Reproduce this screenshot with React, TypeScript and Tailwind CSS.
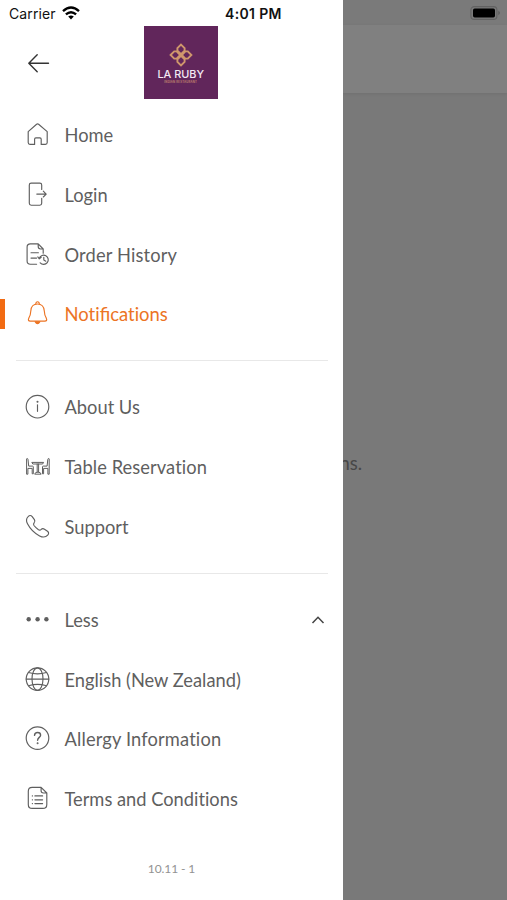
import type { ReactNode } from 'react';

function Icon({ children }: { children: ReactNode }) {
  return (
    <svg
      className="h-[26px] w-[26px] shrink-0 overflow-visible"
      viewBox="0 0 26 26"
      fill="none"
      stroke="currentColor"
      strokeWidth="1.15"
      strokeLinecap="round"
      strokeLinejoin="round"
    >
      {children}
    </svg>
  );
}

const HomeIcon = () => (
  <Icon>
    <path d="M4.2 9.6 12.6 2.2Q13.6 1.4 14.6 2.2L23.2 9.6V20.6Q23.2 22.4 21.4 22.4H17.2V17.2Q17.2 15.9 15.9 15.9H11.9Q10.6 15.9 10.6 17.2V22.4H6Q4.2 22.4 4.2 20.6Z" />
  </Icon>
);

const LoginIcon = () => (
  <Icon>
    <path d="M17.7 7.4V3Q17.7 1.1 15.8 1.1H7.2Q5.3 1.1 5.3 3V21.3Q5.3 23.2 7.2 23.2H15.8Q17.7 23.2 17.7 21.3V16.2" />
    <path d="M12.8 12.1H22.1M19.3 9.2 22.2 12.1 19.3 15" />
  </Icon>
);

const HistoryIcon = () => (
  <Icon>
    <path d="M12.6 22.2H6.4Q3.1 22.2 3.1 19V5Q3.1 1.8 6.4 1.8H14.2L19.2 7V11.2M14.2 1.8V4.6Q14.2 7 16.6 7H19.2" />
    <path d="M7 10.7H14.4M7 16.1H12.6" />
    <path d="M15.3 16.3A4.6 4.6 0 1 1 16.2 20.8M13.8 14.9 15.3 16.8 17.2 15.3M19.8 15.3V18L21.8 19.2" />
  </Icon>
);

const BellIcon = () => (
  <Icon>
    <path d="M13.5 3C9 3 7 6.2 6.8 10C6.6 13.6 6.1 15.4 4.8 17.2Q3.5 20.1 6.3 20.1H20.8Q23.6 20.1 22.3 17.2C21 15.4 20.5 13.6 20.3 10C20 6.2 18 3 13.5 3Z" />
    <path d="M11.8 3.1C11.6-.1 15.5-.1 15.3 3.1" />
    <path d="M11.1 20.7Q13.5 24.6 15.9 20.7Z" fill="currentColor" />
  </Icon>
);

const InfoIcon = () => (
  <Icon>
    <circle cx="13.5" cy="12.7" r="11.3" />
    <path d="M13.5 10.7V17.3" />
    <circle cx="13.5" cy="7.8" r=".45" fill="currentColor" />
  </Icon>
);

const TableIcon = () => (
  <Icon>
    <path strokeWidth="1" d="M2.6 19.8V5Q2.6 4.5 3.2 4.5T4 5.4L4.7 12.1H8.6Q9.3 12.1 9.3 12.9V19.8H8.2V14.4H3.9V19.8ZM25.2 19.8V5Q25.2 4.5 24.6 4.5T23.8 5.4L23.1 12.1H19.2Q18.5 12.1 18.5 12.9V19.8H19.6V14.4H23.9V19.8Z" />
    <path strokeWidth="1" d="M8.2 8.4H19.6L18.6 10H9.2ZM13.2 10V18.2M14.6 10V18.2M10.8 19.8Q11.2 18.2 13.2 18.2H14.6Q16.6 18.2 17 19.8Z" />
  </Icon>
);

const PhoneIcon = () => (
  <Icon>
    <path d="M4.1 2.6Q6.3.3 8.2 2.6L10.4 5.6Q11.6 7.4 10.1 8.9Q9 10.1 10 11.5Q11.9 14 14.5 15.7Q16 16.6 17.2 15.4Q18.6 13.9 20.5 15.2L23.5 17.3Q25.6 19 23.7 21.1C21.6 23.5 18.6 23.4 15.6 21.9C10.4 19.3 6.2 15 3.5 9.8C2 6.9 2 4.7 4.1 2.6Z" />
  </Icon>
);

const DotsIcon = () => (
  <Icon>
    <g fill="currentColor" stroke="none">
      <circle cx="4.7" cy="12.2" r="2.2" />
      <circle cx="13.6" cy="12.2" r="2.2" />
      <circle cx="22.4" cy="12.2" r="2.2" />
    </g>
  </Icon>
);

const GlobeIcon = () => (
  <Icon>
    <circle cx="13.5" cy="12.1" r="11.3" />
    <ellipse cx="13.5" cy="12.1" rx="5.5" ry="11.3" />
    <path d="M2.2 12.1H24.8M4.6 5.5Q13.5 8.2 22.4 5.5M4.6 18.7Q13.5 16 22.4 18.7" />
  </Icon>
);

const QuestionIcon = () => (
  <Icon>
    <circle cx="13.5" cy="12.1" r="11.3" />
    <path strokeWidth="1.4" d="M10.5 9.4C10.6 7.5 11.8 6.5 13.6 6.5C15.4 6.5 16.6 7.5 16.6 9.2C16.6 11.3 13.6 11.5 13.6 14.2" />
    <circle cx="13.6" cy="17.2" r=".4" fill="currentColor" />
  </Icon>
);

const TermsIcon = () => (
  <Icon>
    <path d="M8.2 1.3H17.1L22.8 7V18.4Q22.8 22.4 18.8 22.4H8.2Q4.3 22.4 4.3 18.4V5.2Q4.3 1.3 8.2 1.3ZM17.1 1.3V4.8Q17.1 7 19.4 7H22.8" />
    <path d="M10.9 9.9H18.6M10.9 13.8H18.6M10.9 17.6H18.6M8.3 9.9H8.5M8.3 13.8H8.5M8.3 17.6H8.5" />
  </Icon>
);

function Row({ icon, label, active, children }: { icon: ReactNode; label: ReactNode; active?: boolean; children?: ReactNode }) {
  return (
    <div className={`relative flex h-[59.85px] items-center pr-[18px] pl-6 ${active ? 'text-[#ec7424]' : 'text-[#5f5f5f]'}`}>
      {active && <span className="absolute top-[14px] left-0 h-[30px] w-[4.5px] bg-[#f26b13]" />}
      {icon}
      <span className="ml-[14.5px] flex-1 text-[18.3px] leading-6 whitespace-nowrap [font-variant-ligatures:none]">{label}</span>
      {children}
    </div>
  );
}

function Logo() {
  return (
    <div className="mt-[0.5px] ml-[94px] flex h-[73px] w-[73.5px] flex-col items-center bg-[#61265b]">
      <svg className="mt-[17px] h-6 w-6 shrink-0" viewBox="0 0 24 24" fill="none" stroke="#cf976c" strokeWidth="1.9">
        <path d="M12 1.6 15.6 5.2V7.6L12 11.2 8.4 7.6V5.2ZM12 12.8 15.6 16.4V18.8L12 22.4 8.4 18.8V16.4ZM1.6 12 5.2 8.4H7.6L11.2 12 7.6 15.6H5.2ZM12.8 12 16.4 8.4H18.8L22.4 12 18.8 15.6H16.4Z" />
      </svg>
      <span className="mt-[2px] font-['Inter',sans-serif] text-[10.9px] leading-[11px] font-medium whitespace-nowrap text-[#f3eaf4]">
        LA RUBY
      </span>
      <span className="mt-[1px] font-['Inter',sans-serif] text-[2.8px] leading-[3px] font-semibold tracking-[0.2px] whitespace-nowrap text-[#c98c70]">
        INDIAN RESTAURANT
      </span>
    </div>
  );
}

export default function App() {
  return (
    <div className="flex h-[900px] w-[507px] overflow-hidden font-['Lato',sans-serif]">
      <aside className="flex w-[343px] shrink-0 flex-col bg-white">
        <div className="flex h-[25px] items-center pl-[9px] font-['Inter',sans-serif] text-[#111]">
          <span className="mt-[3px] w-[53px] text-[14px] leading-5 tracking-[0.1px] whitespace-nowrap">Carrier</span>
          <svg className="mt-[1px] h-[14px] w-[18px]" viewBox="0 0 18 14" fill="none" stroke="#000" strokeWidth="2.4">
            <path d="M1 5.1Q9-1.9 17 5.1M3.9 8.4Q9 4 14.1 8.4" />
            <path d="M9 13.4 6.2 10.6Q9 8.3 11.8 10.6Z" fill="#000" stroke="none" />
          </svg>
          <span className="mt-[3px] ml-[145px] text-[14px] leading-5 font-semibold tracking-[0.35px] whitespace-nowrap">4:01 PM</span>
        </div>
        <header className="flex h-20 items-start pl-6">
          <svg className="mt-[25px] h-[26px] w-[26px]" viewBox="0 0 26 26" fill="none" stroke="#333" strokeWidth="1.4" strokeLinecap="round" strokeLinejoin="round">
            <path d="M24.5 13.3H5M13.2 4.8 4.8 13.3 13.2 21.7" />
          </svg>
          <Logo />
        </header>
        <nav>
          <Row icon={<HomeIcon />} label="Home" />
          <Row icon={<LoginIcon />} label="Login" />
          <Row icon={<HistoryIcon />} label={<span className="tracking-[0.15px]">Order History</span>} />
          <Row
            icon={<BellIcon />}
            label={<span className="text-[18.45px]">Noti<span className="[font-variant-ligatures:normal]">fi</span>cations</span>}
            active
          />
          <div className="h-[32.6px] pt-[15.6px] pr-[15px] pl-4">
            <div className="h-px bg-[#e8e8e8]" />
          </div>
          <Row icon={<InfoIcon />} label="About Us" />
          <Row icon={<TableIcon />} label={<span className="tracking-[0.08px]">Table Reservation</span>} />
          <Row icon={<PhoneIcon />} label="Support" />
          <div className="h-[33.3px] pt-[16.4px] pr-[15px] pl-4">
            <div className="h-px bg-[#e8e8e8]" />
          </div>
          <Row icon={<DotsIcon />} label="Less">
            <svg className="h-[14px] w-[14px]" viewBox="0 0 14 14" fill="none" stroke="#444" strokeWidth="1.5">
              <path d="M1.5 10 7 4.3 12.5 10" />
            </svg>
          </Row>
          <Row icon={<GlobeIcon />} label="English (New Zealand)" />
          <Row icon={<QuestionIcon />} label={<span className="tracking-[0.15px]">Allergy Information</span>} />
          <Row icon={<TermsIcon />} label="Terms and Conditions" />
        </nav>
        <p className="mt-8 text-center text-[12px] leading-4 tracking-[-0.1px] text-[#929292]">10.11 - 1</p>
      </aside>
      <main className="flex flex-1 flex-col overflow-hidden bg-[#797979]">
        <div className="flex h-[25px] items-center justify-end bg-[#7a7a7a] pr-[6px]">
          <svg className="mt-[1px] h-[14px] w-[31px]" viewBox="0 0 31 14">
            <rect x=".9" y=".6" width="26" height="12.8" rx="3.4" fill="none" stroke="#626262" strokeWidth="1.1" />
            <rect x="3" y="2.5" width="22" height="9" rx="1.7" fill="#000" />
            <path d="M28.4 4.8Q31.4 7 28.4 9.2Z" fill="#5c5c5c" />
          </svg>
        </div>
        <div className="h-[68px] shrink-0 bg-[#808080] shadow-[0_1px_3px_rgba(0,0,0,0.08)]" />
        <p className="mt-[358px] -ml-[3.5px] text-[18.4px] leading-6 text-[#484848]">ns.</p>
      </main>
    </div>
  );
}
